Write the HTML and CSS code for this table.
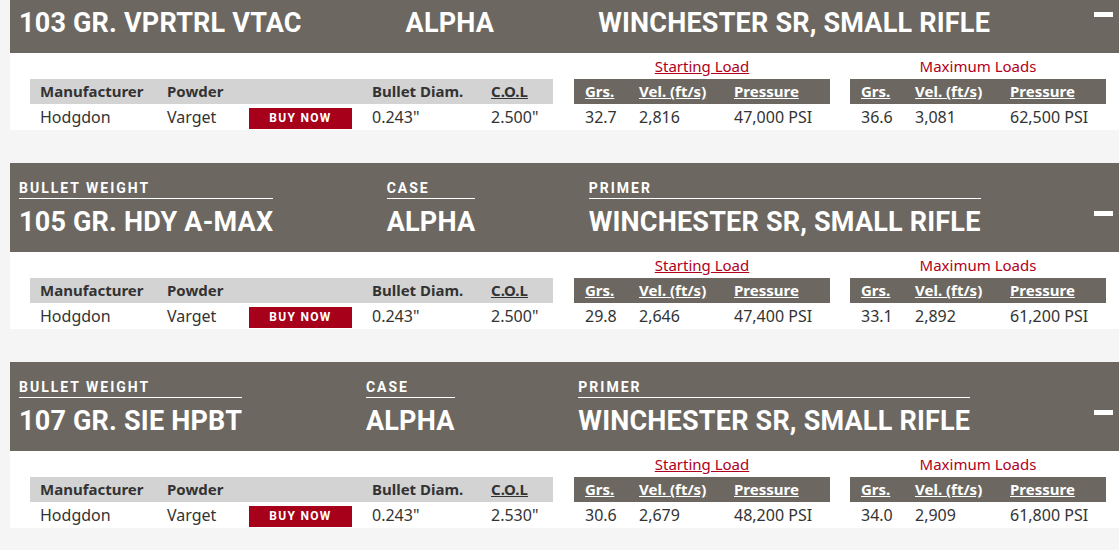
FILE: index.html
```html
<!DOCTYPE html>
<html lang="en">
<head>
<meta charset="utf-8">
<title>Load Data</title>
<link rel="stylesheet" href="styles.css">
</head>
<body>
<div class="list">

  <section class="card">
    <header class="card-head">
      <div class="field"><div class="field-label">BULLET WEIGHT</div><div class="field-value">103 GR. VPRTRL VTAC</div></div>
      <div class="field"><div class="field-label">CASE</div><div class="field-value">ALPHA</div></div>
      <div class="field"><div class="field-label">PRIMER</div><div class="field-value">WINCHESTER SR, SMALL RIFLE</div></div>
      <div class="minus"></div>
    </header>
    <div class="card-body">
      <table class="spec">
        <colgroup><col class="c-man"><col class="c-pow"><col class="c-buy"><col class="c-dia"><col class="c-col"></colgroup>
        <thead><tr><th>Manufacturer</th><th>Powder</th><th></th><th>Bullet Diam.</th><th><u>C.O.L</u></th></tr></thead>
        <tbody><tr><td>Hodgdon</td><td>Varget</td><td class="buy-cell"><a class="buy">BUY NOW</a></td><td>0.243"</td><td>2.500"</td></tr></tbody>
      </table>
      <div class="loads">
        <div class="load">
          <div class="load-title"><u>Starting Load</u></div>
          <table class="load-table">
            <colgroup><col class="c-grs"><col class="c-vel"><col class="c-pre"></colgroup>
            <thead><tr><th><u>Grs.</u></th><th><u>Vel. (ft/s)</u></th><th><u>Pressure</u></th></tr></thead>
            <tbody><tr><td>32.7</td><td>2,816</td><td>47,000 PSI</td></tr></tbody>
          </table>
        </div>
        <div class="load">
          <div class="load-title">Maximum Loads</div>
          <table class="load-table">
            <colgroup><col class="c-grs"><col class="c-vel"><col class="c-pre"></colgroup>
            <thead><tr><th><u>Grs.</u></th><th><u>Vel. (ft/s)</u></th><th><u>Pressure</u></th></tr></thead>
            <tbody><tr><td>36.6</td><td>3,081</td><td>62,500 PSI</td></tr></tbody>
          </table>
        </div>
      </div>
    </div>
  </section>

  <section class="card">
    <header class="card-head">
      <div class="field"><div class="field-label">BULLET WEIGHT</div><div class="field-value">105 GR. HDY A-MAX</div></div>
      <div class="field"><div class="field-label">CASE</div><div class="field-value">ALPHA</div></div>
      <div class="field"><div class="field-label">PRIMER</div><div class="field-value">WINCHESTER SR, SMALL RIFLE</div></div>
      <div class="minus"></div>
    </header>
    <div class="card-body">
      <table class="spec">
        <colgroup><col class="c-man"><col class="c-pow"><col class="c-buy"><col class="c-dia"><col class="c-col"></colgroup>
        <thead><tr><th>Manufacturer</th><th>Powder</th><th></th><th>Bullet Diam.</th><th><u>C.O.L</u></th></tr></thead>
        <tbody><tr><td>Hodgdon</td><td>Varget</td><td class="buy-cell"><a class="buy">BUY NOW</a></td><td>0.243"</td><td>2.500"</td></tr></tbody>
      </table>
      <div class="loads">
        <div class="load">
          <div class="load-title"><u>Starting Load</u></div>
          <table class="load-table">
            <colgroup><col class="c-grs"><col class="c-vel"><col class="c-pre"></colgroup>
            <thead><tr><th><u>Grs.</u></th><th><u>Vel. (ft/s)</u></th><th><u>Pressure</u></th></tr></thead>
            <tbody><tr><td>29.8</td><td>2,646</td><td>47,400 PSI</td></tr></tbody>
          </table>
        </div>
        <div class="load">
          <div class="load-title">Maximum Loads</div>
          <table class="load-table">
            <colgroup><col class="c-grs"><col class="c-vel"><col class="c-pre"></colgroup>
            <thead><tr><th><u>Grs.</u></th><th><u>Vel. (ft/s)</u></th><th><u>Pressure</u></th></tr></thead>
            <tbody><tr><td>33.1</td><td>2,892</td><td>61,200 PSI</td></tr></tbody>
          </table>
        </div>
      </div>
    </div>
  </section>

  <section class="card">
    <header class="card-head">
      <div class="field"><div class="field-label">BULLET WEIGHT</div><div class="field-value">107 GR. SIE HPBT</div></div>
      <div class="field"><div class="field-label">CASE</div><div class="field-value">ALPHA</div></div>
      <div class="field"><div class="field-label">PRIMER</div><div class="field-value">WINCHESTER SR, SMALL RIFLE</div></div>
      <div class="minus"></div>
    </header>
    <div class="card-body">
      <table class="spec">
        <colgroup><col class="c-man"><col class="c-pow"><col class="c-buy"><col class="c-dia"><col class="c-col"></colgroup>
        <thead><tr><th>Manufacturer</th><th>Powder</th><th></th><th>Bullet Diam.</th><th><u>C.O.L</u></th></tr></thead>
        <tbody><tr><td>Hodgdon</td><td>Varget</td><td class="buy-cell"><a class="buy">BUY NOW</a></td><td>0.243"</td><td>2.530"</td></tr></tbody>
      </table>
      <div class="loads">
        <div class="load">
          <div class="load-title"><u>Starting Load</u></div>
          <table class="load-table">
            <colgroup><col class="c-grs"><col class="c-vel"><col class="c-pre"></colgroup>
            <thead><tr><th><u>Grs.</u></th><th><u>Vel. (ft/s)</u></th><th><u>Pressure</u></th></tr></thead>
            <tbody><tr><td>30.6</td><td>2,679</td><td>48,200 PSI</td></tr></tbody>
          </table>
        </div>
        <div class="load">
          <div class="load-title">Maximum Loads</div>
          <table class="load-table">
            <colgroup><col class="c-grs"><col class="c-vel"><col class="c-pre"></colgroup>
            <thead><tr><th><u>Grs.</u></th><th><u>Vel. (ft/s)</u></th><th><u>Pressure</u></th></tr></thead>
            <tbody><tr><td>34.0</td><td>2,909</td><td>61,800 PSI</td></tr></tbody>
          </table>
        </div>
      </div>
    </div>
  </section>

</div>
</body>
</html>
```
FILE: styles.css
```css
* { box-sizing: border-box; }

html, body {
  margin: 0;
  padding: 0;
}

body {
  background: #f5f5f5;
  color: #333333;
  font-family: "Noto Sans", "Open Sans", sans-serif;
  font-size: 15px;
  overflow: hidden;
}

.list {
  display: flex;
  flex-direction: column;
  gap: 33px;
  margin-top: -36px;
  padding-left: 10px;
}

.card {
  background: #ffffff;
}

.card-head {
  background: #6c6861;
  color: #ffffff;
  display: flex;
  justify-content: space-between;
  align-items: flex-end;
  height: 89px;
  padding: 16px 6px 13px 9px;
  font-family: "Roboto", "Liberation Sans", sans-serif;
}

.field {
  flex: none;
}

.field-label {
  font-size: 14px;
  font-weight: 700;
  letter-spacing: 2px;
  line-height: 18px;
  padding-bottom: 1px;
  border-bottom: 1px solid #ffffff;
}

.field-value {
  font-size: 27px;
  font-weight: 700;
  letter-spacing: 0.2px;
  line-height: 34px;
  margin-top: 6px;
  white-space: nowrap;
}

.minus {
  flex: none;
  width: 19px;
  height: 5px;
  background: #ffffff;
  margin-bottom: 23px;
}

.card-body {
  display: flex;
  align-items: flex-end;
  gap: 21px;
  padding: 0 12px 0 20px;
}

table {
  border-collapse: collapse;
  border-spacing: 0;
  table-layout: fixed;
}

th, td {
  text-align: left;
  padding: 0 0 0 10px;
  white-space: nowrap;
}

th {
  height: 25px;
  line-height: 25px;
  font-size: 15px;
  font-weight: 700;
}

td {
  height: 26px;
  line-height: 26px;
  font-size: 16px;
  font-weight: 400;
}

.spec {
  width: 523px;
}

.spec th {
  background: #d3d3d3;
  color: #333333;
}

.c-man { width: 127px; }
.c-pow { width: 82px; }
.c-buy { width: 123px; }
.c-dia { width: 119px; }
.c-col { width: 72px; }

.buy-cell {
  padding: 0 10px;
  vertical-align: top;
}

.buy {
  display: block;
  height: 21px;
  margin-top: 4px;
  background: #a6001a;
  color: #ffffff;
  font-family: "Roboto", "Liberation Sans", sans-serif;
  font-size: 12px;
  font-weight: 700;
  letter-spacing: 1.3px;
  line-height: 21px;
  text-align: center;
  text-decoration: none;
}

.loads {
  display: flex;
  gap: 20px;
}

.load {
  width: 256px;
}

.load-title {
  height: 26px;
  line-height: 26px;
  text-align: center;
  color: #b0001b;
  font-size: 15px;
}

.load-table {
  width: 256px;
}

.load-table th {
  background: #6c6861;
  color: #ffffff;
}

.load-table th, .load-table td {
  padding-left: 11px;
}

.c-grs { width: 54px; }
.c-vel { width: 95px; }
.c-pre { width: 107px; }
```
